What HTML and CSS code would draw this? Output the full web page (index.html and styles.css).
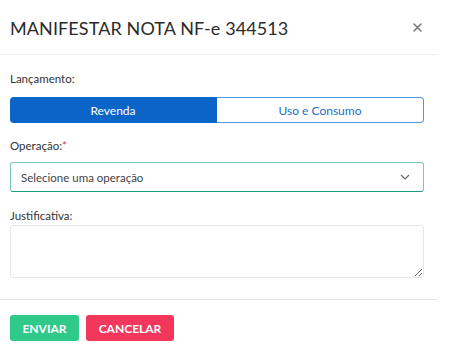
FILE: index.html
```html
<!DOCTYPE html>
<html lang="pt-BR">
<head>
<meta charset="utf-8">
<title>Manifestar Nota</title>
<link rel="stylesheet" href="styles.css">
</head>
<body>
<div class="modal">
  <div class="modal-header">
    <h1 class="modal-title">MANIFESTAR NOTA NF-e 344513</h1>
    <button class="close" aria-label="Fechar">
      <svg width="9" height="9" viewBox="0 0 9 9"><path d="M1 1L8 8M8 1L1 8" stroke="#7a7a7a" stroke-width="1.6" stroke-linecap="round"/></svg>
    </button>
  </div>
  <div class="modal-body">
    <label class="label label-first">Lançamento:</label>
    <div class="toggle">
      <button class="toggle-btn active">Revenda</button>
      <button class="toggle-btn">Uso e Consumo</button>
    </div>
    <label class="label label-op">Operação:<span class="req">*</span></label>
    <div class="select">
      <span>Selecione uma operação</span>
      <svg width="10" height="6" viewBox="0 0 10 6"><path d="M1 1L5 5L9 1" fill="none" stroke="#666" stroke-width="1.2"/></svg>
    </div>
    <label class="label label-just">Justificativa:</label>
    <textarea class="textarea"></textarea>
  </div>
  <div class="modal-footer">
    <button class="btn btn-green">ENVIAR</button>
    <button class="btn btn-red">CANCELAR</button>
  </div>
</div>
</body>
</html>
```
FILE: styles.css
```css
* { box-sizing: border-box; }
body {
  margin: 0;
  background: #fff;
  font-family: "Lato", "Open Sans", sans-serif;
  color: #333;
}
.modal {
  width: 437px;
  background: #fff;
}
.modal-header {
  height: 55px;
  display: flex;
  align-items: center;
  justify-content: space-between;
  padding: 0 15px 0 10px;
  border-bottom: 1px solid #eeeeee;
}
.modal-title {
  margin: 0;
  font-size: 18px;
  font-weight: 400;
  color: #2b2b2b;
  letter-spacing: 0.1px;
  padding-top: 2px;
}
.close {
  border: 0;
  background: none;
  padding: 0;
  display: flex;
}
.modal-body {
  padding: 17px 13px 21px 10px;
  display: flex;
  flex-direction: column;
}
.label {
  font-size: 11.5px;
  color: #333;
  line-height: 14px;
}
.label-first { margin-bottom: 11px; }
.label-op { margin-top: 16px; margin-bottom: 9px; }
.label-just { margin-top: 17px; margin-bottom: 2px; }
.req { color: #e53935; }
.toggle {
  display: flex;
  height: 26px;
}
.toggle-btn {
  flex: 1;
  font-family: inherit;
  font-size: 12px;
  border: 1px solid #4c97e4;
  background: #fff;
  color: #1c6fcb;
  border-radius: 0 4px 4px 0;
  border-left: 0;
}
.toggle-btn.active {
  background: #0b65c9;
  border-color: #0b65c9;
  color: #fff;
  border-radius: 4px 0 0 4px;
}
.select {
  height: 30px;
  border: 1px solid #7cc7b8;
  border-bottom-color: #1d9c86;
  border-radius: 3px;
  display: flex;
  align-items: center;
  justify-content: space-between;
  padding: 0 13px 0 10px;
  font-size: 11.5px;
  color: #444;
}
.textarea {
  height: 53px;
  border: 1px solid #e6e6e6;
  border-radius: 3px;
  resize: vertical;
  font-family: inherit;
}
.modal-footer {
  border-top: 1px solid #e6e6e6;
  padding: 15px 10px;
  display: flex;
  gap: 7px;
}
.btn {
  height: 26px;
  border: 0;
  border-radius: 3px;
  color: #fff;
  font-family: inherit;
  font-weight: 700;
  font-size: 12px;
  padding: 0;
}
.btn-green { background: #2fc98a; width: 69px; }
.btn-red { background: #f3365c; width: 88px; }
```
